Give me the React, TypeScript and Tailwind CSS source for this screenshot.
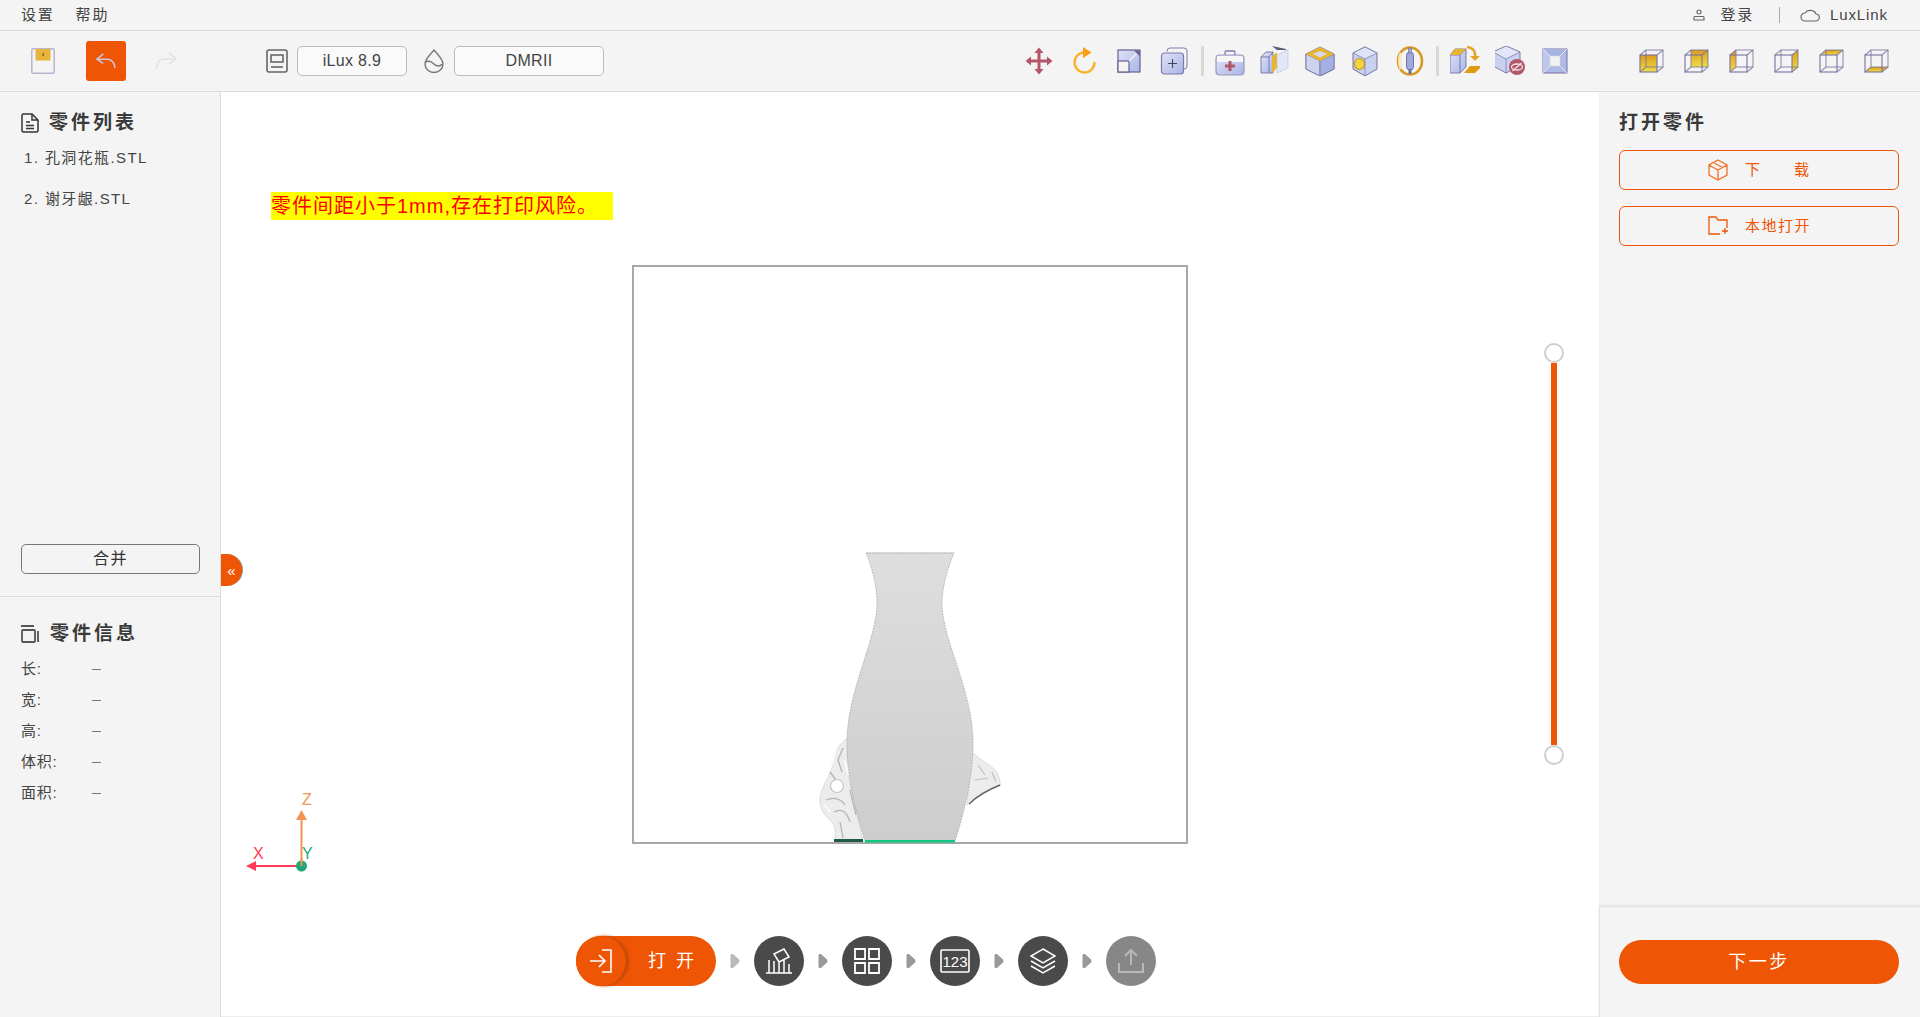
import React from 'react'

const stroke = '#77719f'
const gold = '#e8b52e'

function Defs() {
    return (
        <svg width="0" height="0" className="absolute">
            <defs>
                <linearGradient id="lavG" x1="0" y1="0" x2="1" y2="1">
                    <stop offset="0" stopColor="#dfe3f8" />
                    <stop offset="1" stopColor="#a9b5e6" />
                </linearGradient>
                <linearGradient id="goldG" x1="0" y1="0" x2="0" y2="1">
                    <stop offset="0" stopColor="#dc9a1c" />
                    <stop offset="1" stopColor="#efdf45" />
                </linearGradient>
                <linearGradient id="vaseG" x1="0" y1="0" x2="0" y2="1">
                    <stop offset="0" stopColor="#dedede" />
                    <stop offset="1" stopColor="#cdcdcd" />
                </linearGradient>
            </defs>
        </svg>
    )
}

function Box({ children }: any) {
    return <svg viewBox="0 0 30 30" className="w-[30px] h-[30px] shrink-0">{children}</svg>
}

function ViewCube({ face }: { face: string }) {
    const faces: any = {
        front: '4,9 21,9 21,26 4,26',
        back: '10,4 27,4 27,21 10,21',
        left: '4,9 10,4 10,21 4,26',
        right: '21,9 27,4 27,21 21,26',
        top: '4,9 10,4 27,4 21,9',
        bottom: '4,26 10,21 27,21 21,26',
    }
    return (
        <Box>
            <polygon points={faces[face]} fill="url(#goldG)" />
            <g fill="none" stroke={stroke} strokeWidth="1.1">
                <rect x="10" y="4" width="17" height="17" strokeOpacity="0.75" />
                <path d="M4 9L10 4M21 9L27 4M21 26L27 21M4 26L10 21" strokeOpacity="0.75" />
                <rect x="4" y="9" width="17" height="17" />
            </g>
        </Box>
    )
}

function ToolIcons1() {
    return (
        <>
            {/* move */}
            <Box>
                <g stroke="#b4566a" strokeWidth="3" fill="#b4566a">
                    <path d="M15 6V24M6 15H24" fill="none" />
                    <polygon points="15,1.5 19.5,7 10.5,7" stroke="none" />
                    <polygon points="15,28.5 19.5,23 10.5,23" stroke="none" />
                    <polygon points="1.5,15 7,10.5 7,19.5" stroke="none" />
                    <polygon points="28.5,15 23,10.5 23,19.5" stroke="none" />
                </g>
            </Box>
            {/* rotate */}
            <Box>
                <path d="M15 6.5A10 10 0 1 0 25.5 16" fill="none" stroke="#fbb02e" strokeWidth="2.4" />
                <polygon points="14,1 22.5,6.5 14,12" fill="#fb9c12" />
            </Box>
            {/* scale */}
            <Box>
                <rect x="4" y="4" width="22" height="22" fill="url(#lavG)" stroke="#665f92" strokeWidth="1.2" />
                <rect x="4" y="15" width="11" height="11" fill="#f4f4f4" stroke="#665f92" strokeWidth="1.2" />
                <path d="M15 15L25 5" stroke="#f4f4f4" strokeWidth="1.3" />
                <polygon points="20,4.5 26,4.5 26,10.5" fill="#665f92" />
            </Box>
            {/* copy */}
            <Box>
                <path d="M8 5.5Q8 2 11 2H25Q28 2 28 5V20Q28 23 25 23" fill="#f4f4f4" stroke="#7f79a8" strokeWidth="1" />
                <rect x="2.5" y="7" width="22" height="21" rx="3" fill="url(#lavG)" stroke="#7f79a8" strokeWidth="1.2" />
                <path d="M13.5 13V22M9 17.5H18" stroke="#4a4560" strokeWidth="1.1" />
            </Box>
        </>
    )
}

function ToolIcons2() {
    return (
        <>
            {/* medical box */}
            <Box>
                <path d="M10 9V6.5Q10 5 11.5 5H18.5Q20 5 20 6.5V9" fill="none" stroke="#7f79a8" strokeWidth="1.3" />
                <rect x="1" y="9" width="28" height="20" rx="3.5" fill="url(#lavG)" stroke="#9c98bd" strokeWidth="1.2" />
                <path d="M2 10.5Q2 10 4 10H26Q28 10 28 11V16H2Z" fill="#f6f6f8" />
                <path d="M15 15V25M10 20H20" stroke="#b4566a" strokeWidth="3" />
            </Box>
            {/* cut */}
            <Box>
                <polygon points="1,11 6,6 13,6 13,27 1,27" fill="url(#lavG)" stroke={stroke} strokeWidth="0.9" />
                <path d="M1 11H9V27M9 11L13 6" fill="none" stroke={stroke} strokeWidth="0.9" />
                <polygon points="12,11 17,6 17,22 12,27" fill={gold} />
                <polygon points="17,9 28,4 28,22 17,27" fill="#e3e6f6" stroke="#b6bada" strokeWidth="0.9" strokeDasharray="1.5 1" />
                <polygon points="12,0 26,3 26,4 17,4" fill="#5e5a7d" />
            </Box>
            {/* hollow */}
            <Box>
                <polygon points="15,1 29,8 29,23 15,30 1,23 1,8" fill="url(#lavG)" stroke={stroke} strokeWidth="1" />
                <polygon points="1,8 15,15 15,30 1,23" fill="#cdd3ef" stroke={stroke} strokeWidth="0.8" />
                <polygon points="29,8 15,15 15,30 29,23" fill="#a4b0e3" stroke={stroke} strokeWidth="0.8" />
                <polygon points="15,1 29,8 15,15 1,8" fill={gold} />
                <polygon points="15,5 22,8 15,11.5 8,8" fill="#d3d8ee" />
            </Box>
            {/* drill */}
            <Box>
                <polygon points="15,1 27,7 27,23 15,30 3,23 3,7" fill="#c9d0f0" stroke={stroke} strokeWidth="1" />
                <polygon points="15,1 27,7 15,13 3,7" fill="#dfe3f8" stroke={stroke} strokeWidth="0.7" />
                <path d="M15 13V30" stroke={stroke} strokeWidth="0.7" />
                <ellipse cx="9.5" cy="18" rx="5" ry="5.5" fill="#f2d544" stroke="#c49a1e" strokeWidth="1.2" />
            </Box>
            {/* ring */}
            <Box>
                <ellipse cx="15" cy="15" rx="12" ry="13.5" fill="none" stroke="#d99a22" strokeWidth="2.6" />
                <path d="M6 7Q3 15 6 23" fill="none" stroke="#f7e6bb" strokeWidth="3" />
                <rect x="11.5" y="6" width="7" height="18" rx="3.5" fill="#9fa9de" stroke="#6d6896" strokeWidth="0.9" />
                <rect x="13.5" y="2" width="3" height="5" fill="#9fa9de" stroke="#6d6896" strokeWidth="0.6" />
                <rect x="13.5" y="23" width="3" height="5" fill="#6d6896" />
            </Box>
        </>
    )
}

function ToolIcons3() {
    return (
        <>
            {/* lay flat */}
            <Box>
                <polygon points="0,9 5,3 16,3 16,21 10,27 0,27" fill="url(#lavG)" stroke={stroke} strokeWidth="0.9" />
                <path d="M0 9H10V27M10 9L16 3" fill="none" stroke={stroke} strokeWidth="0.9" />
                <polygon points="0,9 5,3 16,3 10,9" fill={gold} />
                <polygon points="20,20 32,20 25,27 14,27" fill="#df9b12" />
                <path d="M17 1Q26 2 25 11" fill="none" stroke="#e3a527" strokeWidth="2.6" />
                <polygon points="20,10 30,10 25,15" fill="#e3a527" />
            </Box>
            {/* hide */}
            <Box>
                <polygon points="11,0 25,6 25,20 11,27 -2,20 -2,6" fill="#c9d0f0" stroke={stroke} strokeWidth="0.9" />
                <polygon points="11,0 25,6 11,13 -2,6" fill="#e3e6f8" stroke={stroke} strokeWidth="0.7" />
                <path d="M11 13V27" stroke={stroke} strokeWidth="0.7" />
                <circle cx="22" cy="21" r="8" fill="#b4566a" />
                <ellipse cx="22" cy="21" rx="5.5" ry="3" fill="none" stroke="#f3dfe3" strokeWidth="1.3" />
                <path d="M17.5 25L26.5 17" stroke="#f3dfe3" strokeWidth="1.3" />
            </Box>
            {/* inner */}
            <Box>
                <rect x="3" y="3" width="24" height="24" fill="#aeb9e8" stroke={stroke} strokeWidth="1" />
                <polygon points="3,3 10,10 10,20 3,27" fill="#bcc6ee" />
                <polygon points="3,3 27,3 20,10 10,10" fill="#a8b3e2" />
                <path d="M3 3L10 10M27 3L20 10M3 27L10 20M27 27L20 20" stroke="#e8eaf6" strokeWidth="0.9" />
                <rect x="10" y="10" width="10" height="10" fill="#f2f2f2" stroke="#d6d6d6" strokeWidth="0.6" />
            </Box>
        </>
    )
}

function Step({ children, faded }: any) {
    return (
        <div className={`w-[50px] h-[50px] rounded-full flex items-center justify-center shrink-0 ${faded ? 'bg-[#878787]' : 'bg-[#4a4a4a]'}`}>
            <svg viewBox="0 0 30 30" className="w-[30px] h-[30px]" fill="none" stroke={faded ? '#b8b8b8' : '#ffffff'} strokeWidth="1.5">
                {children}
            </svg>
        </div>
    )
}

function Tri({ light }: any) {
    return (
        <svg viewBox="0 0 10 16" className="w-[10px] h-[16px] shrink-0">
            <path d="M1.5 1H3L9 6.5Q10 8 9 9.5L3 15H1.5Q0.5 15 0.5 14V2Q0.5 1 1.5 1Z" fill={light ? '#b9b9b9' : '#999999'} />
        </svg>
    )
}

function InfoRow({ label }: { label: string }) {
    return (
        <div className="flex h-[31px] items-center text-[15px] tracking-[0.8px] text-[#444]">
            <span className="w-[71px]">{label}</span>
            <span className="w-[9px] h-[1px] bg-[#777]"></span>
        </div>
    )
}

export default function App() {
    return (
        <div className="h-screen w-full flex flex-col overflow-hidden bg-white text-[#333] font-['Liberation_Sans','Noto_Sans_CJK_SC',sans-serif]">
            <Defs />

            {/* Menu bar */}
            <div className="h-[31px] shrink-0 bg-[#f4f4f4] border-b border-[#dcdcdc] flex items-center pl-[21px] pr-[32px] text-[15px] tracking-[1.8px] text-[#444]">
                <span>设置</span>
                <span className="ml-[21px]">帮助</span>
                <svg viewBox="0 0 12 12" className="w-[12px] h-[12px] ml-auto" fill="none" stroke="#666" strokeWidth="1.2">
                    <circle cx="6" cy="3" r="2" />
                    <path d="M1 11V8.5Q1 7.5 2 7.5H10Q11 7.5 11 8.5V11Z" />
                </svg>
                <span className="ml-[15px]">登录</span>
                <span className="ml-[25px] w-[1px] h-[16px] bg-[#aaa]"></span>
                <svg viewBox="0 0 20 14" className="w-[20px] h-[14px] ml-[20px]" fill="none" stroke="#666" strokeWidth="1.2">
                    <path d="M5 13H15.5A3.5 3.5 0 0 0 16 6A6 5 0 0 0 5 5A4 4 0 0 0 5 13Z" />
                </svg>
                <span className="ml-[10px] tracking-[0.9px]">LuxLink</span>
            </div>

            {/* Toolbar */}
            <div className="h-[61px] shrink-0 bg-[#f4f4f4] border-b border-[#dcdcdc] flex items-center">
                <svg viewBox="0 0 24 26" className="w-[24px] h-[26px] ml-[31px]">
                    <rect x="0.8" y="0.8" width="22.4" height="24.4" rx="1" fill="#f4f4f4" stroke="#b9b5d0" strokeWidth="1.5" />
                    <rect x="4.5" y="1" width="15" height="11.5" rx="1" fill="#e6b33c" />
                    <rect x="11.5" y="5" width="1.5" height="3" fill="#8a6b1c" />
                </svg>
                <div className="ml-[31px] w-[40px] h-[40px] rounded-[3px] bg-[#ee5505] flex items-center justify-center">
                    <svg viewBox="0 0 24 20" className="w-[22px] h-[18px]" fill="none" stroke="#cfc6d8" strokeWidth="1.8">
                        <path d="M9 2L2 8L9 13" />
                        <path d="M2 8H13Q21 8 22 18" />
                    </svg>
                </div>
                <svg viewBox="0 0 24 20" className="w-[24px] h-[20px] ml-[28px]" fill="none" stroke="#e2e2e2" strokeWidth="1.6">
                    <path d="M15 2L22 8L15 13" />
                    <path d="M22 8H11Q3 8 2 18" />
                </svg>
                <svg viewBox="0 0 22 24" className="w-[22px] h-[24px] ml-[88px]" fill="none" stroke="#666" strokeWidth="1.6">
                    <rect x="1" y="1" width="20" height="22" rx="2" />
                    <rect x="5" y="6" width="12" height="7" />
                    <path d="M5 18H17" />
                </svg>
                <div className="ml-[9px] w-[110px] h-[30px] rounded-[5px] border border-[#bbb] bg-[#fafafa] flex items-center justify-center text-[16px] tracking-[0.3px] text-[#444]">iLux 8.9</div>
                <svg viewBox="0 0 20 24" className="w-[20px] h-[24px] ml-[17px]" fill="none" stroke="#777" strokeWidth="1.4">
                    <path d="M10 1C6 6 1 10 1 15A9 8.5 0 0 0 19 15C19 10 14 6 10 1Z" />
                    <path d="M1.5 13Q6 11 10 15T18.5 15" />
                </svg>
                <div className="ml-[10px] w-[150px] h-[30px] rounded-[5px] border border-[#bbb] bg-[#fafafa] flex items-center justify-center text-[16px] tracking-[0.3px] text-[#444]">DMRII</div>

                <div className="ml-[420px] flex items-center gap-[15px]"><ToolIcons1 /></div>
                <div className="ml-[12px] w-[3px] h-[30px] bg-[#d8d8d8]"></div>
                <div className="ml-[11px] flex items-center gap-[15px]"><ToolIcons2 /></div>
                <div className="ml-[11px] w-[3px] h-[30px] bg-[#d8d8d8]"></div>
                <div className="ml-[11px] flex items-center gap-[15px]"><ToolIcons3 /></div>
                <div className="ml-[66px] flex items-center gap-[15px]">
                    <ViewCube face="front" />
                    <ViewCube face="back" />
                    <ViewCube face="left" />
                    <ViewCube face="right" />
                    <ViewCube face="top" />
                    <ViewCube face="bottom" />
                </div>
            </div>

            <div className="flex flex-1 min-h-0">
                {/* Left panel */}
                <div className="relative w-[221px] shrink-0 bg-[#f4f4f4] border-r border-[#dcdcdc] flex flex-col">
                    <div className="flex-1 px-[21px] pt-[21px] flex flex-col">
                        <div className="flex items-center h-[20px]">
                            <svg viewBox="0 0 18 20" className="w-[18px] h-[20px]" fill="none" stroke="#333" strokeWidth="1.5">
                                <path d="M2.5 1H11L17 7V17.5Q17 19 15.5 19H2.5Q1 19 1 17.5V2.5Q1 1 2.5 1Z" />
                                <path d="M11 1V7H17M5 9H9M5 12.5H13M5 15.5H13" />
                            </svg>
                            <span className="ml-[10px] text-[19px] font-bold tracking-[3px] text-[#3a3a3a]">零件列表</span>
                        </div>
                        <div className="mt-[14px] ml-[3px] text-[15px] tracking-[1.4px] text-[#444]">1. 孔洞花瓶.STL</div>
                        <div className="mt-[18px] ml-[3px] text-[15px] tracking-[1.4px] text-[#444]">2. 谢牙龈.STL</div>
                        <div className="mt-auto mb-[22px] h-[30px] w-[179px] rounded-[5px] border border-[#777] flex items-center justify-center text-[16px] tracking-[1.5px]">合并</div>
                    </div>
                    <div className="h-[421px] shrink-0 border-t border-[#dcdcdc] px-[21px] pt-[27px]">
                        <div className="flex items-center h-[20px]">
                            <svg viewBox="0 0 18 18" className="w-[18px] h-[18px]" fill="none" stroke="#555" strokeWidth="1.8">
                                <path d="M0 1H13M2 5H13Q14 5 14 6V16Q14 17 13 17H2Q1 17 1 16V6Q1 5 2 5ZM17 6V17" />
                            </svg>
                            <span className="ml-[11px] text-[19px] font-bold tracking-[3px] text-[#3a3a3a]">零件信息</span>
                        </div>
                        <div className="mt-[10px]">
                            <InfoRow label="长:" />
                            <InfoRow label="宽:" />
                            <InfoRow label="高:" />
                            <InfoRow label="体积:" />
                            <InfoRow label="面积:" />
                        </div>
                    </div>
                    {/* collapse tab */}
                    <div className="absolute left-[221px] top-[462px] w-[22px] h-[32px] rounded-r-full bg-[#ee5505] border-r border-[#999] flex items-center justify-center text-white text-[15px] leading-none">«</div>
                </div>

                {/* Viewport */}
                <div className="relative flex-1 min-w-0 flex flex-col border-b border-[#eeeeee]">
                    <div className="mt-[100px] ml-[50px] w-[342px] h-[28px] bg-[#ffff00] text-[#ff0000] text-[20px] leading-[28px] tracking-[1px] whitespace-nowrap">零件间距小于1mm,存在打印风险。</div>
                    <div className="mt-[45px] flex justify-center">
                        <svg viewBox="632 265 556 580" className="w-[556px] h-[580px]">
                            <rect x="633" y="266" width="554" height="577" fill="#fff" stroke="#a8a8a8" strokeWidth="2" />
                            {/* skull behind the vase */}
                            <path d="M848 738C838 744 835 752 832 768C828 780 819 790 820 802C821 815 830 818 834 825C836 832 835 836 835 841H863L847 770Z" fill="#ececec" stroke="#d6d6d6" strokeWidth="0.8" />
                            <path d="M843 748L838 760L842 772M830 772L836 780M826 800Q838 795 845 805M834 812Q845 806 850 822M840 822L843 838M850 790L856 815" stroke="#b4b4b4" strokeWidth="1.3" fill="none" />
                            <path d="M836 750L832 765M845 760L848 775M824 804L830 812" stroke="#fafafa" strokeWidth="2" fill="none" />
                            <circle cx="837" cy="786" r="6.5" fill="#fff" stroke="#c4c4c4" strokeWidth="1.2" />
                            <path d="M972 752C982 762 994 766 998 774C1000 780 1000 784 1001 785C990 790 978 796 967 805Z" fill="#ececec" stroke="#d6d6d6" strokeWidth="0.8" />
                            <path d="M978 765L985 775M975 780L988 778M992 772L996 782" stroke="#c2c2c2" strokeWidth="1.2" fill="none" />
                            <path d="M1000 785C990 789 978 795 969 804" fill="none" stroke="#666" strokeWidth="1.4" />
                            <rect x="834" y="839" width="29" height="3" fill="#1f5c48" />
                            <path d="M866 553L954 553C946 572 942 590 942 603C942 640 973 690 973 743C973 775 965 810 955 841L865 841C855 810 847 775 847 743C847 690 877 640 877 603C877 590 874 572 866 553Z" fill="url(#vaseG)" stroke="#a6a6a6" strokeWidth="0.7" strokeDasharray="2 1" />
                            <path d="M866 553H954" stroke="#c8c8c8" strokeWidth="1" />
                            <rect x="865" y="840" width="90" height="2.5" fill="#12c783" />
                        </svg>
                    </div>

                    {/* step bar */}
                    <div className="mt-[91px] ml-[355px] flex items-center gap-[14px]">
                        <div className="relative w-[140px] h-[50px] rounded-full bg-[#ee5505] flex items-center shrink-0">
                            <div className="w-[50px] h-[50px] rounded-full bg-[#ee5505] shadow-[3px_0_3px_#c34a06] flex items-center justify-center">
                                <svg viewBox="0 0 30 30" className="w-[30px] h-[30px]" fill="none" stroke="#fff" strokeWidth="1.6">
                                    <path d="M16 4H25V26H16M4 15H19M13 9L19 15L13 21" />
                                </svg>
                            </div>
                            <span className="ml-[22px] text-white text-[18px] tracking-[10px] whitespace-nowrap">打开</span>
                        </div>
                        <Tri light />
                        <Step>
                            <path d="M2 27H28M5 27V14M10 27V15M15 27V16M20 27V14M25 27V18M10 8L20 3L25 11L15 16Z" />
                        </Step>
                        <Tri />
                        <Step>
                            <path d="M3 3H13V13H3ZM17 3H27V13H17ZM3 17H13V27H3ZM17 17H27V27H17Z" strokeWidth="1.8" />
                        </Step>
                        <Tri />
                        <Step>
                            <rect x="1" y="4" width="28" height="22" rx="1" strokeWidth="1.6" />
                            <text x="15" y="21" textAnchor="middle" fontSize="15" fill="#fff" stroke="none">123</text>
                        </Step>
                        <Tri />
                        <Step>
                            <path d="M15 3L27 10L15 17L3 10ZM3 15L15 22L27 15M3 20L15 27L27 20" />
                        </Step>
                        <Tri />
                        <Step faded>
                            <path d="M15 19V4M9 10L15 4L21 10M3 17V26H27V17" strokeWidth="2" />
                        </Step>
                    </div>

                    {/* axes */}
                    <svg viewBox="0 -12 80 92" className="absolute left-[20px] top-[696px] w-[80px] h-[92px]">
                        <line x1="60.5" y1="66" x2="60.5" y2="18" stroke="#f59352" strokeWidth="2" />
                        <polygon points="60.5,10 66,20 55,20" fill="#f59352" />
                        <line x1="60" y1="66" x2="12" y2="66" stroke="#ff3b55" strokeWidth="2" />
                        <polygon points="5,66 15,61 15,71" fill="#ff3b55" />
                        <circle cx="60.5" cy="66" r="5.5" fill="#1fa97a" />
                        <line x1="60.5" y1="66" x2="60.5" y2="58" stroke="#f59352" strokeWidth="2" />
                        <text x="61" y="5" fontSize="16" fill="#f59352">Z</text>
                        <text x="12" y="59" fontSize="16" fill="#ff3b55">X</text>
                        <text x="61" y="59" fontSize="16" fill="#1fa97a">Y</text>
                    </svg>

                    {/* height slider */}
                    <div className="absolute left-[1323px] top-[251px] h-[422px] w-[20px] flex flex-col items-center">
                        <span className="w-[20px] h-[20px] rounded-full border-2 border-[#cfcfcf] bg-white shrink-0"></span>
                        <span className="w-[6px] flex-1 bg-[#ee5505]"></span>
                        <span className="w-[20px] h-[20px] rounded-full border-2 border-[#cfcfcf] bg-white shrink-0"></span>
                    </div>
                </div>

                {/* Right panel */}
                <div className="w-[321px] shrink-0 bg-[#f4f4f4] flex flex-col">
                    <div className="flex-1 pl-[20px] pr-[21px] pt-[21px]">
                        <div className="h-[20px] flex items-center text-[19px] font-bold tracking-[3px] text-[#3a3a3a]">打开零件</div>
                        <div className="mt-[17px] h-[40px] rounded-[6px] border border-[#ee5505] flex items-center pl-[88px] text-[15px] text-[#ee5505]">
                            <svg viewBox="0 0 20 22" className="w-[20px] h-[22px]" fill="none" stroke="#f2702a" strokeWidth="1.3">
                                <path d="M10 1L19 6V16L10 21L1 16V6ZM1 6L10 11L19 6M10 11V21M5.5 3.5L14.5 8.5" />
                            </svg>
                            <span className="ml-[17px]">下</span>
                            <span className="ml-[34px]">载</span>
                        </div>
                        <div className="mt-[16px] h-[40px] rounded-[6px] border border-[#ee5505] flex items-center pl-[88px] text-[15px] tracking-[1.5px] text-[#ee5505]">
                            <svg viewBox="0 0 20 20" className="w-[20px] h-[20px]" fill="none" stroke="#ee5505" strokeWidth="1.3">
                                <path d="M12 18H1V1H8L10 4H19V12M14 15H20M17 12V18" />
                            </svg>
                            <span className="ml-[17px]">本地打开</span>
                        </div>
                    </div>
                    <div className="h-[111px] shrink-0 border-t border-l border-[#e2e2e2] shadow-[0_-1px_3px_rgba(0,0,0,0.06)] pl-[19px] pr-[21px] pt-[33px]">
                        <div className="h-[44px] rounded-full bg-[#ee5505] flex items-center justify-center text-white text-[18px] tracking-[2.5px]">下一步</div>
                    </div>
                </div>
            </div>
        </div>
    )
}
